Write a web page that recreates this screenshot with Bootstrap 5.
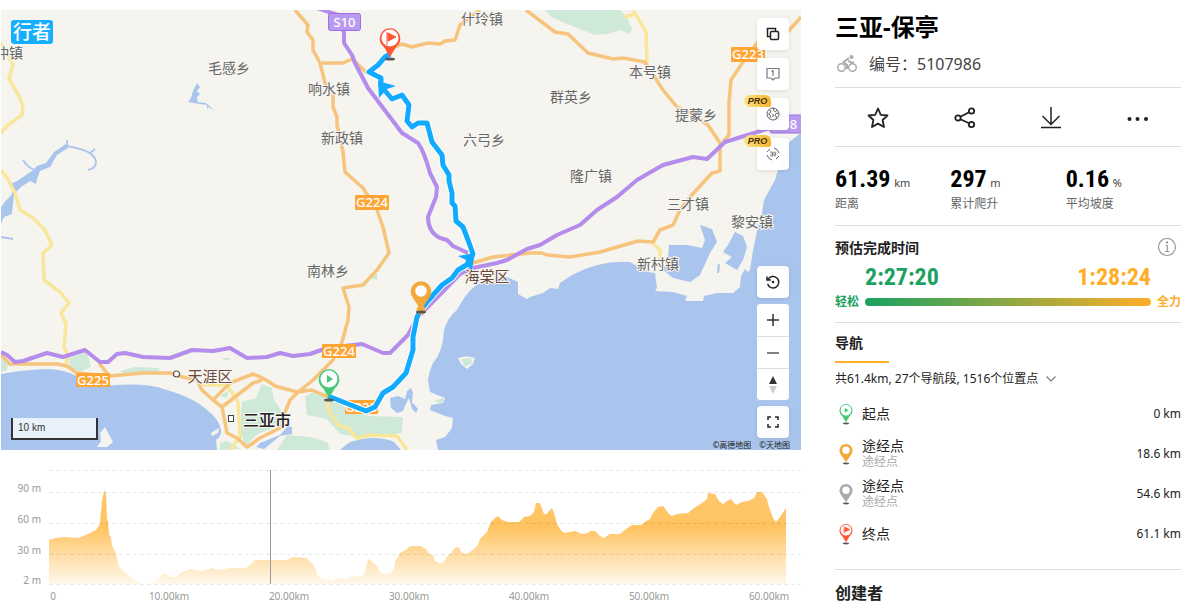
<!DOCTYPE html>
<html lang="zh-CN">
<head>
<meta charset="utf-8">
<meta name="viewport" content="width=device-width, initial-scale=1">
<title>三亚-保亭</title>
<link href="https://cdn.jsdelivr.net/npm/bootstrap@5.3.0/dist/css/bootstrap.min.css" rel="stylesheet">
<style>
  body { font-family: "Noto Sans", "Noto Sans CJK SC", sans-serif; font-size: 14px; color: #222; background: #fff; }
  .route-page { padding: 0 7px 0 1px; column-gap: 34px; }
  .map-side { min-width: 0; padding-top: 10px; }
  .map-box { aspect-ratio: 20 / 11; overflow: hidden; background: #f5f4ee; }
  .map-svg, .chart-svg { display: block; width: 100%; height: auto; }
  .map-brand { top: 10px; left: 10px; height: 24px; padding: 0 2px; border-radius: 3px; background: #16aeff; color: #fff; font-size: 19px; line-height: 24px; font-weight: 500; text-decoration: none; }
  .map-scale { left: 10px; bottom: 10px; width: 87px; height: 22px; padding-left: 5px; border: 2px solid #333; border-top: 0; background: rgba(255,255,255,.75); color: #333; font: 10px/20px "Liberation Sans", sans-serif; }
  .map-tools { top: 8px; right: 12px; bottom: 12px; }
  .tool-btn { width: 32px; height: 32px; padding: 0; border: 0; border-radius: 4px; background: rgba(255,255,255,.96); box-shadow: 0 1px 4px rgba(0,0,0,.1); display: flex; align-items: center; justify-content: center; color: #222; }
  .tool-btn:hover { background: #fff; }
  .zoom-stack { margin: 6px 0; border-radius: 4px; overflow: hidden; background: #fff; }
  .zoom-stack .tool-btn { border-radius: 0; box-shadow: none; background: #fff; }
  .zoom-stack .tool-btn + .tool-btn { border-top: 1px solid #ddd; }
  .pro-tag { left: -13px; top: -3px; width: 27px; height: 12px; border-radius: 6px 6px 2px 6px; background: linear-gradient(90deg, #fce588, #f7b42c); color: #4a2d00; font: italic bold 9px/12px "Liberation Sans", sans-serif; text-align: center; }
  .map-credit { right: 11px; bottom: 0; font-size: 8px; line-height: 10px; color: #222; }
  .lbl { font-size: 14px; fill: #666; stroke: #f8f7f3; stroke-width: 2px; paint-order: stroke; text-anchor: middle; }
  .lbl-edge { text-anchor: start; }
  .lbl-district { font-size: 15px; fill: #6b4a3c; }
  .lbl-city { font-size: 16px; fill: #222; font-weight: 500; }
  .shield { font-size: 13px; fill: #fff; text-anchor: middle; font-weight: 500; }
  .axis { font-size: 10px; fill: #999; }

  .info-side { width: 346px; flex: none; padding-top: 8px; }
  .info-part { border-bottom: 1px solid #ddd; }
  .route-title { font-size: 24px; line-height: 38px; font-weight: 700; color: #000; }
  .route-id { font-size: 16px; line-height: 20px; color: #444; margin: 8px 0 13px; }
  .act-btn { height: 58px; border: 0; padding: 0; color: #222; }
  .stat-row { padding: 14px 0; }
  .num { font-family: "Roboto Condensed", "Liberation Sans Narrow", "DejaVu Sans Condensed", sans-serif; font-weight: 700; font-size: 24px; color: #000; }
  .stat-val { line-height: 36px; height: 35px; }
  .stat-unit { font-size: 11px; color: #444; }
  .stat-name { font-size: 12px; line-height: 16px; color: #666; margin-bottom: -1px; }
  .part-head { font-size: 14px; line-height: 24px; font-weight: 600; }
  .est { padding: 10px 0; }
  .est-times { padding: 0 30px; line-height: 30px; margin-top: 2px; }
  .est-times .num { line-height: 30px; }
  .easy { color: #1ba160 !important; }
  .full { color: #ffae28 !important; }
  .est-bar { gap: 6px; font-size: 12px; line-height: 20px; font-weight: 600; }
  .est-track { height: 8px; border-radius: 4px; background: linear-gradient(90deg, #1ba160, #ffae28); }
  .nav-part { padding: 8px 0 16px; }
  .nav-head { display: inline-block; width: 54px; padding-bottom: 6px; border-bottom: 2px solid #ffae28; }
  .sum-btn { display: flex; align-items: center; margin: 7px 0 5px; padding: 0; border: 0; background: none; font-size: 12px; line-height: 18px; color: #222; }
  .way { height: 40px; padding: 2px 0 0 4px; }
  .way-name { font-size: 14px; line-height: 16px; color: #222; margin-left: 9px; }
  .way-sub { font-size: 12px; line-height: 16px; color: #aaa; }
  .way-km { font-size: 12px; color: #222; }
  .owner { font-size: 16px; line-height: 24px; font-weight: 600; padding-top: 11px; }
  @media (max-width: 991px) { .info-side { width: auto; padding: 8px 12px; } }
</style>
</head>
<body>
<svg width="0" height="0" class="position-absolute" aria-hidden="true">
  <defs>
    <symbol id="pin-ring" viewBox="0 0 22 34">
      <ellipse cx="11" cy="32" rx="5" ry="1.500" fill="#555"/>
      <path d="M11 30 L5 20 A10.300 10.300 0 1 1 17 20 Z" fill="currentColor"/>
      <circle cx="11" cy="11" r="8.500" fill="#fff"/>
    </symbol>
    <symbol id="pin-dot" viewBox="0 0 22 34">
      <ellipse cx="11" cy="32" rx="5" ry="1.500" fill="#555"/>
      <path d="M11 30 L3 18 A10.300 10.300 0 1 1 19 18 Z" fill="currentColor"/>
      <circle cx="11" cy="11" r="5.800" fill="#fff"/>
    </symbol>
    <path id="track" d="M390 54 L385 57 L378 65 L369 72 L381 78 L381 86 L392 99 L402 95 L409 105 L407 121 L412 127 L418 123 L427 123 L432 142 L442 155 L443 165 L449 175 L449 181 L452 193 L452 203 L455 206 L456 221 L463 227 L468 240 L473 254 L468 264 L458 270 L452 278 L442 285 L427 302 L421 310 L417 317 L413 337 L413 350 L406 373 L393 387 L383 393 L375 407 L366 411 L328 396"/>
  </defs>
</svg>
<main class="route-page d-flex flex-column flex-lg-row">
  <section class="map-side flex-grow-1">
    <div class="map-box position-relative">
      <svg class="map-svg" viewBox="1 10 800 440" role="img" aria-label="路线地图">
        <rect x="1" y="10" width="800" height="440" fill="#f5f4ee"/>
        <!-- woods -->
        <g fill="#cfe9d9">
          <path d="M545 10 L553 18 L570 25 L595 35 L608 34 L620 30 L630 34 L632 29 L627 17 L620 10Z"/>
          <path d="M69 358 L87 352 L91 367 L80 372 L70 366Z M1 358 L8 364 L7 370 L1 372Z"/>
          <path d="M120 371 L135 367 L160 368 L158 372 L125 374Z M222 358 L231 358 L226 361Z"/>
          <path d="M305 397 L315 391 L330 394 L347 410 L370 416 L403 417 L402 433 L380 436 L365 438 L340 434 L327 419 L307 415Z"/>
          <path d="M242 402 L256 398 L262 384 L272 388 L274 400 L283 413 L280 425 L258 434 L245 446 L240 430Z"/>
          <path d="M277 450 L287 435 L310 437 L327 442 L330 450Z M220 396 L229 390 L227 398Z M370 278 L377 274 L377 280Z M220 443 L227 441 L240 449 L220 450Z"/>
        </g>
        <!-- sea and lakes -->
        <g fill="#a9c5ee">
          <path d="M1 374 Q22 370 45 369 Q66 369 80 378 Q98 387 117 385 Q148 383 167 390 Q194 398 207 410 Q219 419 221 430 Q222 436 216 440 L217 450 L1 450Z"/>
          <path d="M438 450 L436 440 L445 437 L452 428 L453 418 L445 416 L430 410 L431 405 L443 403 L445 398 L430 392 L428 380 Q429 371 433 363 Q443 352 444 330 Q448 317 457 310 Q466 293 475 286 Q490 276 507 277 L518 282 L518 294 L527 299 L530 297 L543 293 L550 288 L558 289 L560 283 L572 275 Q600 260 630 262 L648 272 L655 273 L657 288 L655 291 L673 292 L687 296 L685 301 L703 301 L704 296 L717 293 L733 293 L740 287 L741 276 L745 269 L748 272 L750 270 L753 250 L758 227 L762 213 L764 200 L775 180 L780 163 L788 143 L801 133 L801 450Z"/>
          <path d="M700 225 L712 229 L717 242 L710 253 L700 275 L690 282 L673 278 L663 270 L668 257 L669 245 L687 245 L702 248 L705 240Z"/>
          <path d="M735 232 L743 236 L747 247 L743 260 L737 270 L725 263 L732 257 L723 252 L728 245Z M718 263 L720 265 L719 273 L717 273Z"/>
          <path d="M340 450 Q350 439 370 438 Q387 438 394 442 L401 450Z M260 443 L280 435 L288 426 L292 427 L292 434 L280 436 L264 449 L256 447Z"/>
          <path d="M390 398 L398 396 L405 399 L407 391 L411 388 L413 393 L412 402 L418 409 L416 413 L412 409 L409 398 L405 406 L403 411 L397 413 L391 408Z"/>
          <path d="M1 224 L1 207 L4 203 L12 194 L12 183 L17 181 L32 171 L37 166 L46 163 L54 152 L66 144 L68 148 L57 155 L50 167 L40 171 L37 179 L36 184 L30 181 L21 187 L14 194 L12 214 L4 217Z"/>
          <path d="M197 83 L200 87 L197 91 L200 94 L197 97 L198 102 L206 103 L214 110 L208 107 L207 110 L207 105 L194 103 L188 102 L191 98 L193 91Z"/>
        </g>
        <path d="M66 146 C80 148 95 152 96 162 C96 167 92 169 88 170 M67 146 V140 M90 153 L95 149 M23 160 Q28 168 35 170 M1 237 L13 239" fill="none" stroke="#a9c5ee" stroke-width="1.800"/>
        <g fill="#f5f4ee"><path d="M458 358 Q466 355 475 358 L473 364 L467 369 L461 364Z M105 427 L113 442 L107 447 L97 447 L101 441 L100 433Z M211 433 L219 428 L218 433 L212 436Z"/></g>
        <path d="M461 359 L471 358 L472 363 L465 367Z M434 401 L443 398 L444 401 L440 404Z" fill="#cfe9d9"/>
        <!-- roads -->
        <g fill="none" stroke-linejoin="round">
          <g stroke="#f8e79b" stroke-width="3.500">
            <path d="M1 43 L13 65 L9 79 L20 98 L23 108 L22 115 L8 125 L1 133 M1 170 L8 179 L15 193 L20 210 L32 217 L45 230 L52 245 L43 253 L44 280 L60 292 L69 303 L61 313 L66 324 L64 348 L68 355 L66 364"/>
            <path d="M633 10 L646 32 L647 62 M623 17 L636 14 M653 243 L660 250 L660 262 M202 385 L227 385 L238 402 L240 437 L230 450 M327 397 L328 410 L338 425 L348 428 L357 438 L370 435 L397 436 L407 450"/>
          </g>
          <g stroke="#f6c47c" stroke-width="3.500">
            <path d="M295 10 L308 25 L307 32 L313 40 L313 50 L320 63 L325 83 L333 93 L333 107 L337 117 L337 125 L343 152 L345 172 L363 188 L377 210 L383 227 L389 253 L377 270 L363 285 L343 288 L349 307 L348 320 L342 342 L333 360 L313 380 L297 393 L290 400 L283 417 L282 427 L260 438 L247 447 L237 438 L227 433 L222 407 L213 400 L202 390 L197 380 L183 377 L170 373 L143 373 L110 376 L77 373 L67 366 L57 364 L10 364 L1 355"/>
            <path d="M99 363 L110 377 M222 407 L253 383 L262 380 M213 400 L230 383 L253 374 Q266 379 275 386 L297 392 L312 390 L328 397"/>
            <path d="M322 63 H343 L352 59 L367 73 M393 48 L402 44 L412 47 L428 43 L440 44 L445 41 L455 40 L460 25 L480 10"/>
            <path d="M526 10 L555 32 L568 34 L588 53 L613 59 L623 58 L645 62 L663 90 L677 107 L690 113 L708 125 L720 143 L720 171 L712 173 L690 197 L680 210 L673 225 L660 230 L653 242 L638 241 L600 252 L570 257 L547 255 L542 253 H530 L493 257 L473 263"/>
            <path d="M801 17 L787 33 L757 43 L743 62 L731 80 L729 103 V135 L723 142"/>
          </g>
          <g stroke="#b48ceb" stroke-width="4">
            <path d="M1 352 L7 355 L15 362 L23 361 L47 353 L63 357 L85 350 L100 362 L108 362 L117 354 L125 353 L143 357 L170 358 L192 350 L213 351 L230 348 L247 358 L267 357 L280 353 L293 356 L310 354 L327 348 L362 344 L383 353 L390 353 L408 335 L417 318 L460 274 L473 268 L497 263 L507 260 L527 249 L540 245 L557 235 L580 225 L597 210 L617 197 L637 180 L663 165 L693 157 L707 159 L725 142 L770 128 L801 122"/>
            <path d="M317 8 L338 15 L344 33 V43 L352 55 L355 63 L368 88 L402 133 L418 143 Q424 151 430 173 L437 187 L436 197 L428 217 Q428 232 440 238 L447 240 L453 246 L468 253"/>
          </g>
        </g>
        <!-- road shields -->
        <rect x="328.500" y="13.500" width="32" height="17" rx="2" fill="#b99af0" stroke="#9c6fe6"/>
        <rect x="770" y="115" width="32" height="18" rx="2" fill="#b99af0" stroke="#9c6fe6"/>
        <g fill="#ffa536">
          <rect x="355" y="195" width="34" height="15" rx="1"/><rect x="731" y="47" width="34" height="15" rx="1"/>
          <rect x="322" y="344" width="34" height="14" rx="1"/><rect x="76" y="373" width="34" height="14" rx="1"/><rect x="345" y="400" width="33" height="14" rx="1"/>
        </g>
        <g class="shield">
          <text x="344.500" y="27">S10</text><text x="785" y="129">G98</text><text x="372" y="207">G224</text><text x="748" y="59">G223</text>
          <text x="339" y="356">G224</text><text x="93" y="385">G225</text><text x="361" y="412">G223</text>
        </g>
        <!-- place names -->
        <g class="lbl">
          <text class="lbl-edge" x="-5" y="58">冲镇</text><text x="229" y="73">毛感乡</text><text x="482" y="24">什玲镇</text><text x="329" y="94">响水镇</text><text x="342" y="143">新政镇</text>
          <text x="484" y="145">六弓乡</text><text x="650" y="77">本号镇</text><text x="571" y="102">群英乡</text><text x="696" y="120">提蒙乡</text><text x="591" y="181">隆广镇</text>
          <text x="688" y="209">三才镇</text><text x="752" y="227">黎安镇</text><text x="658" y="269">新村镇</text><text x="328" y="276">南林乡</text>
          <text class="lbl-district" x="210" y="382">天涯区</text><text class="lbl-district" x="487" y="282">海棠区</text>
          <text class="lbl-city" x="267" y="426">三亚市</text>
        </g>
        <circle cx="176.500" cy="374" r="3" fill="#fff" stroke="#555" stroke-width="1.200"/>
        <rect x="228.500" y="415.500" width="5" height="6" fill="#fff" stroke="#444"/>
        <!-- recorded track -->
        <g fill="none" stroke-linejoin="round">
          <use href="#track" stroke="#fff" stroke-width="7"/>
          <use href="#track" stroke="#12aaff" stroke-width="5"/>
        </g>
        <path d="M378 81 L396 86 L387 89 L379 98Z M475 253 L458 256 L466 260 L465 264 L472 270Z" fill="#12aaff"/>
        <!-- markers -->
        <g color="#ff5537"><use href="#pin-ring" x="379" y="27" width="22" height="34"/><path d="M387 32 V45 M388 33 L396 37 L388 41Z" fill="#ff5537" stroke="#ff5537"/></g>
        <g color="#f3a93a"><circle cx="421" cy="310" r="4.500" fill="#f3a93a"/><use href="#pin-dot" x="410" y="280" width="22" height="34"/></g>
        <g color="#45c878"><use href="#pin-ring" x="318" y="368" width="22" height="34"/><path d="M327 375 V383 L333 379Z" fill="#45c878"/></g>
      </svg>

      <a href="#" class="map-brand position-absolute">行者</a>
      <div class="map-scale position-absolute">10 km</div>
      <div class="map-tools position-absolute d-flex flex-column justify-content-between">
        <div class="d-flex flex-column gap-2">
          <button type="button" class="tool-btn" aria-label="图层"><svg width="14" height="14" viewBox="0 0 14 14" fill="none" stroke="currentColor" stroke-width="1.500"><rect x="4.500" y="4.500" width="8" height="8" rx="1"/><path d="M4 9.500 H1.500 V1.500 H9.500 V4"/></svg></button>
          <button type="button" class="tool-btn" aria-label="路点"><svg width="14" height="14" viewBox="0 0 14 14" fill="none" stroke="#777" stroke-width="1.200"><path d="M1 1.500 H13 V11 H9 L7 13 L5 11 H1Z M5.500 4.500 L7 3.800 V9"/></svg></button>
          <button type="button" class="tool-btn position-relative" aria-label="卫星图"><span class="pro-tag position-absolute">PRO</span><svg width="14" height="14" viewBox="0 0 14 14" fill="none" stroke="#666" stroke-width="1"><circle cx="7" cy="7" r="6"/><path d="M3 2.500 L5 4 L4 6 L2.500 7 L4 8 L4.500 10 L3.500 11.500 M8 1 L7.500 3.500 L9.500 5 L11 3 M12.500 6 L10 6.500 L9 8.500 L10.500 9.500 L10 12 M6 6.500 L7.500 8 L6.500 10"/></svg></button>
          <button type="button" class="tool-btn position-relative" aria-label="三维"><span class="pro-tag position-absolute">PRO</span><svg width="14" height="14" viewBox="0 0 14 14" fill="none" stroke="#666" stroke-width="1"><path d="M8 1 Q12 2 13 6 M6 13 Q2 12 1 8 M10 12 L13 9 M1 5 L4 2"/><path stroke-width=".8" d="M4 5 H6.500 V9 H4 M4.500 7 H6.500 M8 5 H9 Q10.500 7 9 9 H8Z"/></svg></button>
        </div>
        <div class="d-flex flex-column">
          <button type="button" class="tool-btn" aria-label="复位"><svg width="14" height="14" viewBox="0 0 14 14" fill="none" stroke="currentColor" stroke-width="1.500"><path d="M2 4.500 A5.700 5.700 0 1 1 1.600 9 M1 1.500 V5 H5"/><circle cx="7" cy="7" r="1.300" fill="currentColor" stroke="none"/></svg></button>
          <div class="zoom-stack">
            <button type="button" class="tool-btn" aria-label="放大"><svg width="12" height="12" viewBox="0 0 12 12" stroke="#333" stroke-width="1.500"><path d="M0 6 H12 M6 0 V12"/></svg></button>
            <button type="button" class="tool-btn" aria-label="缩小"><svg width="12" height="12" viewBox="0 0 12 12" stroke="#555" stroke-width="1.500"><path d="M0 6 H12"/></svg></button>
            <button type="button" class="tool-btn" aria-label="指北"><svg width="8" height="18" viewBox="0 0 8 18"><path d="M0 8 L4 0 L8 8Z" fill="#333"/><path d="M0 10 L4 18 L8 10Z" fill="#ccc"/></svg></button>
          </div>
          <button type="button" class="tool-btn" aria-label="全屏"><svg width="12" height="12" viewBox="0 0 12 12" fill="none" stroke="currentColor" stroke-width="1.500"><path d="M1 4 V1 H4 M8 1 H11 V4 M11 8 V11 H8 M4 11 H1 V8"/></svg></button>
        </div>
      </div>
      <div class="map-credit position-absolute d-flex gap-2"><span>©高德地图</span><span>©天地图</span></div>
    </div>

    <svg class="chart-svg" viewBox="1 450 800 155" role="img" aria-label="海拔曲线">
      <defs><linearGradient id="elev" gradientUnits="userSpaceOnUse" x1="0" y1="492" x2="0" y2="584"><stop offset="0" stop-color="#ffc76d"/><stop offset=".38" stop-color="#ffc360"/><stop offset="1" stop-color="#fff8ec"/></linearGradient></defs>
      <path fill="url(#elev)" d="M49 584 V540 L55 538 L64 537 L79 538 L83 536 L88 534 L92 532 L96 530 L99 526 L100 523 L102 500 L104 492 L105 490 L106 494 L107 519 L108 521 L109 534 L111 538 L112 545 L116 554 L119 567 L123 571 L134 579 L140 583 L146 584 L154 583 L158 580 L162 574 L167 574 L171 577 L177 577 L180 573 L190 569 L202 571 L212 568 L218 570 L230 568 L246 568 L251 564 L255 560 L270 560 L287 560 L293 557 L306 558 L312 563 L315 568 L318 576 L323 579 L330 580 L333 581 L336 578 L347 579 L354 576 L361 577 L365 572 L367 563 L369 559 L373 563 L377 566 L380 572 L385 574 L391 573 L394 569 L395 562 L400 553 L407 549 L410 546 L420 546 L426 549 L429 554 L433 555 L435 561 L439 563 L443 563 L447 557 L451 553 L455 548 L459 547 L461 552 L465 554 L470 552 L475 548 L478 545 L480 539 L487 532 L491 522 L495 518 L498 516 L502 520 L508 522 L519 522 L524 517 L530 516 L534 512 L536 503 L540 503 L544 514 L547 514 L549 511 L552 508 L554 513 L557 524 L560 529 L564 533 L575 531 L582 534 L588 533 L590 531 L595 531 L600 536 L604 538 L610 534 L620 534 L626 529 L632 525 L641 525 L645 522 L650 519 L653 513 L658 507 L663 506 L666 510 L669 514 L672 516 L677 514 L688 513 L694 508 L702 503 L707 499 L708 493 L715 494 L719 501 L723 504 L727 501 L731 499 L736 505 L742 502 L748 501 L754 498 L757 492 L762 492 L767 499 L769 507 L773 518 L776 522 L780 517 L784 511 L786 508 V584Z"/>
      <g stroke="#000" stroke-opacity=".09" stroke-dasharray="4 3"><path d="M49 470.500 H801 M49 492.500 H801 M49 523.500 H801 M49 554.500 H801 M49 584.500 H801"/></g>
      <path d="M270.500 470 V584" stroke="#999"/>
      <g class="axis" text-anchor="end"><text x="41" y="492">90 m</text><text x="41" y="523">60 m</text><text x="41" y="554">30 m</text><text x="41" y="584">2 m</text></g>
      <g class="axis" text-anchor="middle"><text x="53" y="600">0</text><text x="169" y="600">10.00km</text><text x="289" y="600">20.00km</text><text x="409" y="600">30.00km</text><text x="529" y="600">40.00km</text><text x="649" y="600">50.00km</text><text x="769" y="600">60.00km</text></g>
    </svg>
  </section>

  <aside class="info-side">
    <header class="info-part overflow-hidden">
      <h1 class="route-title m-0">三亚-保亭</h1>
      <div class="route-id d-flex align-items-center">
        <svg class="me-2" width="26" height="20" viewBox="0 0 26 20" fill="none" stroke="#aaa" stroke-width="1.500"><circle cx="6.500" cy="13.500" r="3.800"/><circle cx="17.500" cy="13.500" r="3.800"/><circle cx="16.500" cy="3" r="2" fill="#aaa" stroke="none"/><path d="M14 4 L8.500 8 L12 11 V15 M13 6.500 L16 8.500 H19" stroke-width="2"/></svg>
        <span>编号：5107986</span>
      </div>
    </header>
    <div class="info-part row g-0">
      <button type="button" class="act-btn btn col" aria-label="收藏"><svg width="22" height="22" viewBox="0 0 22 22" fill="none" stroke="currentColor" stroke-width="1.800" stroke-linejoin="round"><path d="M11 1.500 L13.800 7.800 L20.500 8.500 L15.600 13 L17 20 L11 16.600 L5 20 L6.400 13 L1.500 8.500 L8.200 7.800Z"/></svg></button>
      <button type="button" class="act-btn btn col" aria-label="分享"><svg width="22" height="22" viewBox="0 0 22 22" fill="none" stroke="currentColor" stroke-width="1.800"><circle cx="4" cy="11" r="2.700"/><circle cx="17.500" cy="4" r="2.700"/><circle cx="17.500" cy="17.500" r="2.700"/><path d="M6.400 9.800 L15 5.200 M6.400 12.200 L15 16.300"/></svg></button>
      <button type="button" class="act-btn btn col" aria-label="下载"><svg width="22" height="22" viewBox="0 0 22 22" fill="none" stroke="currentColor" stroke-width="1.500"><path d="M11 0 V17 M2.500 9 L11 17.500 L19.500 9 M1 20.500 H21"/></svg></button>
      <button type="button" class="act-btn btn col" aria-label="更多"><svg width="22" height="22" viewBox="0 0 22 22" fill="currentColor"><circle cx="2.500" cy="12" r="2"/><circle cx="10.500" cy="12" r="2"/><circle cx="19" cy="12" r="2"/></svg></button>
    </div>
    <div class="info-part stat-row row g-0">
      <div class="col"><div class="stat-val"><span class="num">61.39</span> <span class="stat-unit">km</span></div><div class="stat-name">距离</div></div>
      <div class="col"><div class="stat-val"><span class="num">297</span> <span class="stat-unit">m</span></div><div class="stat-name">累计爬升</div></div>
      <div class="col"><div class="stat-val"><span class="num">0.16</span> <span class="stat-unit">%</span></div><div class="stat-name">平均坡度</div></div>
    </div>
    <section class="info-part est">
      <div class="d-flex justify-content-between align-items-center">
        <h2 class="part-head m-0">预估完成时间</h2>
        <a href="#" class="me-1 lh-1" aria-label="说明"><svg width="20" height="20" viewBox="0 0 20 20" fill="none" stroke="#999" stroke-width="1.200"><circle cx="10" cy="9" r="8.500"/><path d="M8.500 7.500 H10.300 V13 M8 13.500 H12.500" /><circle cx="10" cy="4.500" r=".6" fill="#999"/></svg></a>
      </div>
      <div class="est-times d-flex justify-content-between"><span class="num easy">2:27:20</span><span class="num full">1:28:24</span></div>
      <div class="est-bar d-flex align-items-center"><span class="easy">轻松</span><div class="est-track flex-grow-1"></div><span class="full">全力</span></div>
    </section>
    <section class="info-part nav-part">
      <h2 class="part-head nav-head m-0 align-top">导航</h2>
      <button type="button" class="sum-btn">共61.4km, 27个导航段, 1516个位置点<svg class="ms-2" width="10" height="6" viewBox="0 0 10 6" fill="none" stroke="#777" stroke-width="1.100"><path d="M.5 .5 L5 5 L9.500 .5"/></svg></button>
      <ul class="list-unstyled m-0">
        <li class="way d-flex align-items-center"><svg width="14" height="22" viewBox="0 0 22 34" color="#45c878"><use href="#pin-ring"/><path d="M9 7 V15 L15 11Z" fill="#45c878"/></svg><div class="way-name">起点</div><span class="way-km ms-auto">0 km</span></li>
        <li class="way d-flex align-items-center"><svg width="14" height="22" viewBox="0 0 22 34" color="#f3a93a"><use href="#pin-dot"/></svg><div class="way-name">途经点<div class="way-sub">途经点</div></div><span class="way-km ms-auto">18.6 km</span></li>
        <li class="way d-flex align-items-center"><svg width="14" height="22" viewBox="0 0 22 34" color="#aaa"><use href="#pin-dot"/></svg><div class="way-name">途经点<div class="way-sub">途经点</div></div><span class="way-km ms-auto">54.6 km</span></li>
        <li class="way d-flex align-items-center"><svg width="14" height="22" viewBox="0 0 22 34" color="#ff5537"><use href="#pin-ring"/><path d="M8 5 V17 M9 6 L17 10 L9 14Z" fill="#ff5537" stroke="#ff5537"/></svg><div class="way-name">终点</div><span class="way-km ms-auto">61.1 km</span></li>
      </ul>
    </section>
    <h2 class="owner m-0">创建者</h2>
  </aside>
</main>
<script src="https://cdn.jsdelivr.net/npm/bootstrap@5.3.0/dist/js/bootstrap.bundle.min.js"></script>
</body>
</html>
